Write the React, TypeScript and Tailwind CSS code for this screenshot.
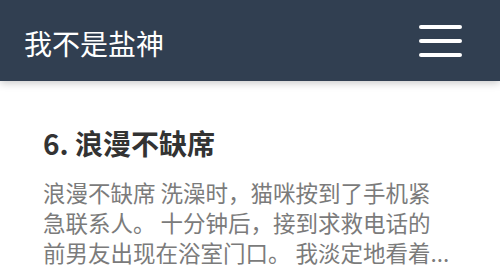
import React from 'react';

const FONT = '"Noto Sans CJK SC", "Noto Sans", sans-serif';

function Header() {
  return (
    <header className="relative z-10 flex h-[81px] items-center justify-between bg-[#313f51] pl-6 pr-[38px] shadow-[0_2px_8px_rgba(0,0,0,0.22)]">
      <h1 className="text-[28px] font-normal leading-none text-white pt-[5px]">我不是盐神</h1>
      <button className="flex w-[43px] flex-col gap-[10px]" aria-label="menu">
        <span className="block h-[4px] w-full rounded-full bg-white" />
        <span className="block h-[4px] w-full rounded-full bg-white" />
        <span className="block h-[4px] w-full rounded-full bg-white" />
      </button>
    </header>
  );
}

export default function App() {
  const excerpt =
    '浪漫不缺席 洗澡时，猫咪按到了手机紧急联系人。 十分钟后，接到求救电话的前男友出现在浴室门口。 我淡定地看着...';

  return (
    <div className="min-h-[280px] bg-white" style={{ fontFamily: FONT }}>
      <Header />
      <main className="px-[43px] pt-[43px]">
        <h2 className="text-[28px] font-bold leading-[39px] text-[#333333]">6. 浪漫不缺席</h2>
        <p className="mt-[14px] w-[410px] text-[22.5px] leading-[30px] text-[#7b7b7b]">{excerpt}</p>
      </main>
    </div>
  );
}
